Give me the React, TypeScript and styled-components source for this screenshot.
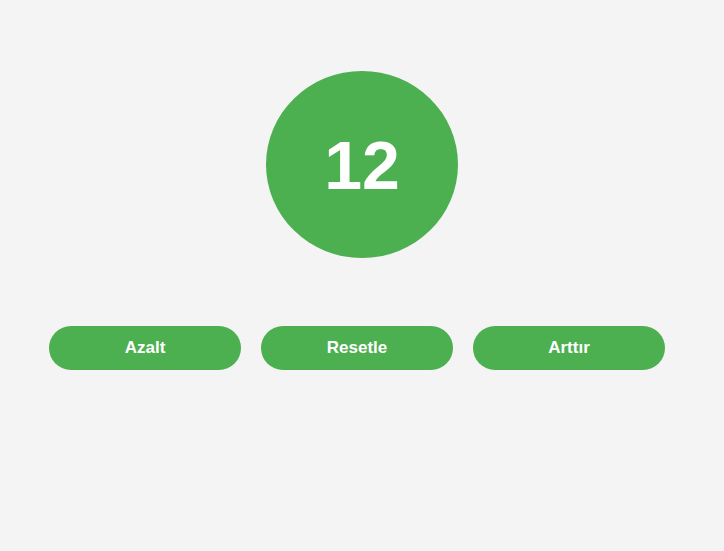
import React, { FC, useState } from 'react';
import styled, { createGlobalStyle } from 'styled-components';

const GlobalStyle = createGlobalStyle`
  html, body {
    margin: 0;
    padding: 0;
    background: #f4f4f4;
    font-family: "Liberation Sans", Arial, sans-serif;
  }
`;

const Page = styled.div`
  min-height: 100vh;
  display: flex;
  flex-direction: column;
  align-items: center;
  padding-top: 71px;
  box-sizing: border-box;
`;

const Counter = styled.div`
  width: 192px;
  height: 187px;
  border-radius: 50%;
  background: #4caf50;
  color: #fff;
  display: flex;
  align-items: center;
  justify-content: center;
  font-size: 68px;
  font-weight: bold;
  line-height: 1;
`;

const ButtonRow = styled.div`
  width: 100%;
  box-sizing: border-box;
  display: flex;
  gap: 20px;
  padding: 0 59px 0 49px;
  margin-top: 68px;
`;

const Button = styled.button`
  flex: 1;
  height: 44px;
  border: none;
  border-radius: 22px;
  background: #4caf50;
  color: #fff;
  font-family: "Liberation Sans", Arial, sans-serif;
  font-size: 17px;
  font-weight: bold;
  cursor: pointer;
`;

const App: FC = () => {
  const [count, setCount] = useState(12);

  return (
    <>
      <GlobalStyle />
      <Page>
        <Counter>{count}</Counter>
        <ButtonRow>
          <Button onClick={() => setCount(count - 1)}>Azalt</Button>
          <Button onClick={() => setCount(0)}>Resetle</Button>
          <Button onClick={() => setCount(count + 1)}>Arttır</Button>
        </ButtonRow>
      </Page>
    </>
  );
};

export default App;
